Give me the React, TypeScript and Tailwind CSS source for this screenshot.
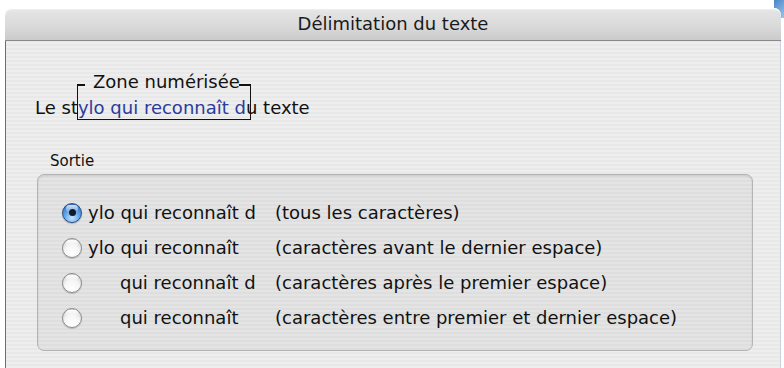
import React from "react";

const font = "font-['DejaVu_Sans','Liberation_Sans',sans-serif]";

function Radio({ checked }: { checked?: boolean }) {
  if (checked) {
    return (
      <div className="relative flex h-[20px] w-[20px] shrink-0 items-center justify-center rounded-full border border-[#2d4f86] bg-[radial-gradient(circle_at_50%_78%,#c4e6ff_0%,#6aaeee_40%,#2f6cc0_85%,#244f94_100%)] shadow-[0_1px_1px_rgba(0,0,0,0.25)]">
        <div className="absolute left-[3px] right-[3px] top-[1px] h-[7px] rounded-full bg-[linear-gradient(#ffffffcc,#ffffff22)]" />
        <div className="relative h-[7px] w-[7px] rounded-full bg-[#141c2c]" />
      </div>
    );
  }
  return (
    <div className="relative h-[20px] w-[20px] shrink-0 rounded-full border border-[#8c8c8c] bg-[radial-gradient(circle_at_50%_80%,#ffffff_0%,#f6f6f6_45%,#d2d2d2_85%,#bdbdbd_100%)] shadow-[0_1px_1px_rgba(0,0,0,0.2)]">
      <div className="absolute left-[3px] right-[3px] top-[1px] h-[7px] rounded-full bg-[linear-gradient(#ffffff,#ffffff00)]" />
    </div>
  );
}

const rows = [
  { checked: true, name: "ylo qui reconnaît d", indent: false, desc: "(tous les caractères)" },
  { checked: false, name: "ylo qui reconnaît", indent: false, desc: "(caractères avant le dernier espace)" },
  { checked: false, name: "qui reconnaît d", indent: true, desc: "(caractères après le premier espace)" },
  { checked: false, name: "qui reconnaît", indent: true, desc: "(caractères entre premier et dernier espace)" },
];

export default function App() {
  return (
    <div className={`relative h-[368px] w-[784px] overflow-hidden bg-white ${font}`}>
      <div className="absolute right-0 top-0 h-[18px] w-[10px] bg-[linear-gradient(135deg,#4a86c8,#9cc3ea)]" />
      <div className="h-[8px]" />
      <div className="relative ml-[5px] flex h-[360px] w-[776px] flex-col">
        {/* title bar */}
        <div className="flex h-[33px] shrink-0 items-center justify-center rounded-t-[7px] border-b border-[#8a8a8a] bg-[linear-gradient(#f4f4f4_0%,#e4e4e4_10%,#d9d9d9_60%,#cacaca_100%)] shadow-[inset_0_1px_0_#ffffff]">
          <span className="text-[18px] leading-none text-[#1a1a1a]">Délimitation du texte</span>
        </div>
        {/* content */}
        <div className="flex flex-1 flex-col border-l border-r border-l-[#6e6e6e] border-r-[#c9d4e0] bg-[repeating-linear-gradient(0deg,#eeeeee_0px,#eeeeee_2px,#e8e8e8_2px,#e8e8e8_4px)] pl-[29px] pr-[26px]">
          <div className="mt-[30px] ml-[58px] text-[18px] leading-[22px] text-[#111]">Zone numérisée</div>
          <div className="mt-[4px] text-[18px] leading-[22px] text-[#111]">
            Le st
            <span className="relative inline-block text-[#2a3c9e]">
              ylo qui reconnaît d
              <span className="absolute -bottom-[1px] -left-[1px] -right-[5px] top-[-13px] border-b-[1.5px] border-l-[1.5px] border-r-[1.5px] border-[#111]" />
              <span className="absolute left-[-1px] top-[-13px] h-[1.5px] w-[8px] bg-[#111]" />
              <span className="absolute right-[-5px] top-[-13px] h-[1.5px] w-[12px] bg-[#111]" />
            </span>
            u texte
          </div>
          <div className="mt-[33px] ml-[15px] text-[15px] leading-[18px] text-[#111]">Sortie</div>
          <div className="mt-[4px] ml-[2px] flex h-[177px] w-[716px] flex-col rounded-[7px] border border-[#b4b4b4] bg-[#0000000a] pl-[24px] pt-[20px] shadow-[inset_0_1px_2px_rgba(0,0,0,0.12)]">
            {rows.map((r, i) => (
              <div key={i} className="flex h-[35px] items-center text-[18px] text-[#111]">
                <Radio checked={r.checked} />
                <span className={`ml-[6px] w-[187px] shrink-0 whitespace-pre ${r.indent ? "pl-[32px]" : ""}`}>{r.name}</span>
                <span className="whitespace-pre">{r.desc}</span>
              </div>
            ))}
          </div>
        </div>
      </div>
    </div>
  );
}
